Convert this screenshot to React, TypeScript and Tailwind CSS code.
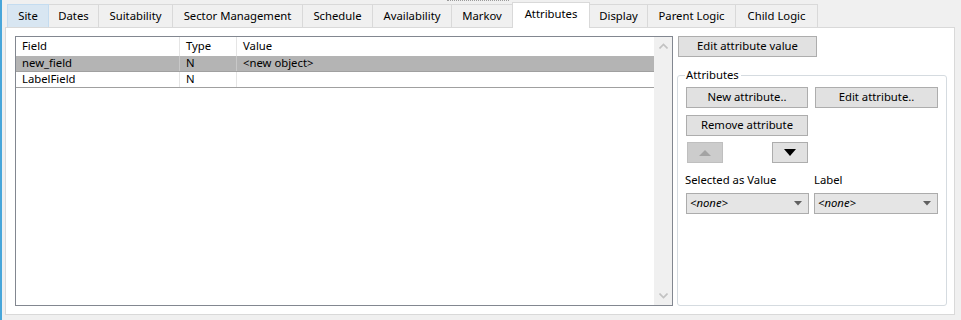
import React from "react";

const tabs: { label: string; w: number; selected?: boolean; hover?: boolean }[] = [
  { label: "Site", w: 42, hover: true },
  { label: "Dates", w: 51 },
  { label: "Suitability", w: 75 },
  { label: "Sector Management", w: 131 },
  { label: "Schedule", w: 71 },
  { label: "Availability", w: 80 },
  { label: "Markov", w: 62 },
  { label: "Attributes", w: 78, selected: true },
  { label: "Display", w: 59 },
  { label: "Parent Logic", w: 89 },
  { label: "Child Logic", w: 83 },
];

function Btn({ label, w }: { label: string; w: number }) {
  return (
    <div
      className="h-[21px] border border-[#adadad] bg-[#e1e1e1] flex items-center justify-center text-black"
      style={{ width: w }}
    >
      {label}
    </div>
  );
}

function Combo({ w }: { w: number }) {
  return (
    <div
      className="h-[21px] border border-[#acacac] bg-[#e5e5e5] flex items-center justify-between pl-[3px] pr-[6px]"
      style={{ width: w }}
    >
      <span className="italic">&lt;none&gt;</span>
      <svg width="8" height="5" viewBox="0 0 8 5">
        <path d="M0 0 L8 0 L4 4.5 Z" fill="#606060" />
      </svg>
    </div>
  );
}

export default function App() {
  return (
    <div
      className="w-[961px] h-[320px] bg-[#f0f0f0] flex text-[11.3px] text-black overflow-hidden"
      style={{ fontFamily: '"Noto Sans", "Segoe UI", sans-serif' }}
    >
      <div className="w-[2px] h-full bg-[#48a6da]" />
      <div className="ml-[3px] w-[950px] flex flex-col relative">
        <div className="absolute top-0 left-[442px] w-[62px] h-[1px] border-t border-dotted border-[#9a9a9a]" />
        <div className="h-[27px] flex items-end pl-[2px]">
          {tabs.map((t) =>
            t.selected ? (
              <div
                key={t.label}
                className="h-[26px] -mb-[1px] -ml-[1px] bg-white border border-b-0 border-[#d9d9d9] relative z-10 flex items-center justify-center pb-[3px]"
                style={{ width: t.w }}
              >
                {t.label}
              </div>
            ) : (
              <div
                key={t.label}
                className={
                  "h-[23px] -ml-[1px] first:ml-0 border border-b-0 flex items-center justify-center " +
                  (t.hover
                    ? "bg-[#d8e6f2] border-[#c4dcf0] relative z-[5]"
                    : "bg-[#f0f0f0] border-[#d9d9d9]")
                }
                style={{ width: t.w }}
              >
                {t.label}
              </div>
            )
          )}
        </div>
        <div className="h-[288px] bg-white border border-[#d9d9d9] pl-[9px] pt-[8px] flex">
          {/* grid */}
          <div className="w-[658px] h-[270px] border border-[#828790] flex">
            <div className="flex-1 flex flex-col">
              <div className="h-[19px] flex">
                <div className="w-[164px] border-r border-[#e5e5e5] pl-[6px] flex items-center">Field</div>
                <div className="w-[57px] border-r border-[#e5e5e5] pl-[6px] flex items-center">Type</div>
                <div className="flex-1 pl-[6px] flex items-center">Value</div>
              </div>
              <div className="h-[16px] flex bg-[#b4b4b4] border-b border-[#a0a0a0]">
                <div className="w-[164px] border-r border-[#c8c8c8] pl-[6px] flex items-center">new_field</div>
                <div className="w-[57px] border-r border-[#c8c8c8] pl-[6px] flex items-center">N</div>
                <div className="flex-1 pl-[6px] flex items-center">&lt;new object&gt;</div>
              </div>
              <div className="h-[16px] flex border-b border-[#a0a0a0]">
                <div className="w-[164px] border-r border-[#e5e5e5] pl-[6px] flex items-center">LabelField</div>
                <div className="w-[57px] border-r border-[#e5e5e5] pl-[6px] flex items-center">N</div>
                <div className="flex-1 pl-[6px] flex items-center"></div>
              </div>
            </div>
            <div className="w-[18px] bg-[#f0f0f0] flex flex-col justify-between items-center py-[6px]">
              <svg width="9" height="6" viewBox="0 0 9 6">
                <path d="M0.5 5.5 L4.5 1.5 L8.5 5.5" stroke="#c2c2c2" strokeWidth="1.6" fill="none" />
              </svg>
              <svg width="9" height="6" viewBox="0 0 9 6">
                <path d="M0.5 0.5 L4.5 4.5 L8.5 0.5" stroke="#c2c2c2" strokeWidth="1.6" fill="none" />
              </svg>
            </div>
          </div>
          {/* right column */}
          <div className="ml-[4px] w-[270px] flex flex-col">
            <div className="pl-[1px]">
              <Btn label="Edit attribute value" w={139} />
            </div>
            <div className="mt-[18px] h-[231px] border border-[#d5dbe0] rounded-[3px] relative pl-[8px] pt-[11px] flex flex-col">
              <div className="absolute -top-[9px] left-[7px] bg-white pr-[2px] pl-[1px] leading-[16px]">
                Attributes
              </div>
              <div className="flex gap-[7px]">
                <Btn label="New attribute.." w={122} />
                <Btn label="Edit attribute.." w={123} />
              </div>
              <div className="mt-[7px]">
                <Btn label="Remove attribute" w={122} />
              </div>
              <div className="mt-[6px] flex">
                <div className="w-[36px] h-[21px] border border-[#bfbfbf] bg-[#cccccc] flex items-center justify-center ml-[1px]">
                  <svg width="12" height="6" viewBox="0 0 12 6">
                    <path d="M0 6 L6 0 L12 6 Z" fill="#a3a3a3" />
                  </svg>
                </div>
                <div className="w-[36px] h-[21px] border border-[#adadad] bg-[#e1e1e1] flex items-center justify-center ml-[49px]">
                  <svg width="12" height="7" viewBox="0 0 12 7">
                    <path d="M0 0 L12 0 L6 7 Z" fill="#000" />
                  </svg>
                </div>
              </div>
              <div className="mt-[9px] h-[16px] flex items-center">
                <div className="w-[129px] -ml-[1px]">Selected as Value</div>
                <div>Label</div>
              </div>
              <div className="mt-[5px] flex gap-[5px]">
                <Combo w={123} />
                <Combo w={124} />
              </div>
            </div>
          </div>
        </div>
      </div>
    </div>
  );
}
